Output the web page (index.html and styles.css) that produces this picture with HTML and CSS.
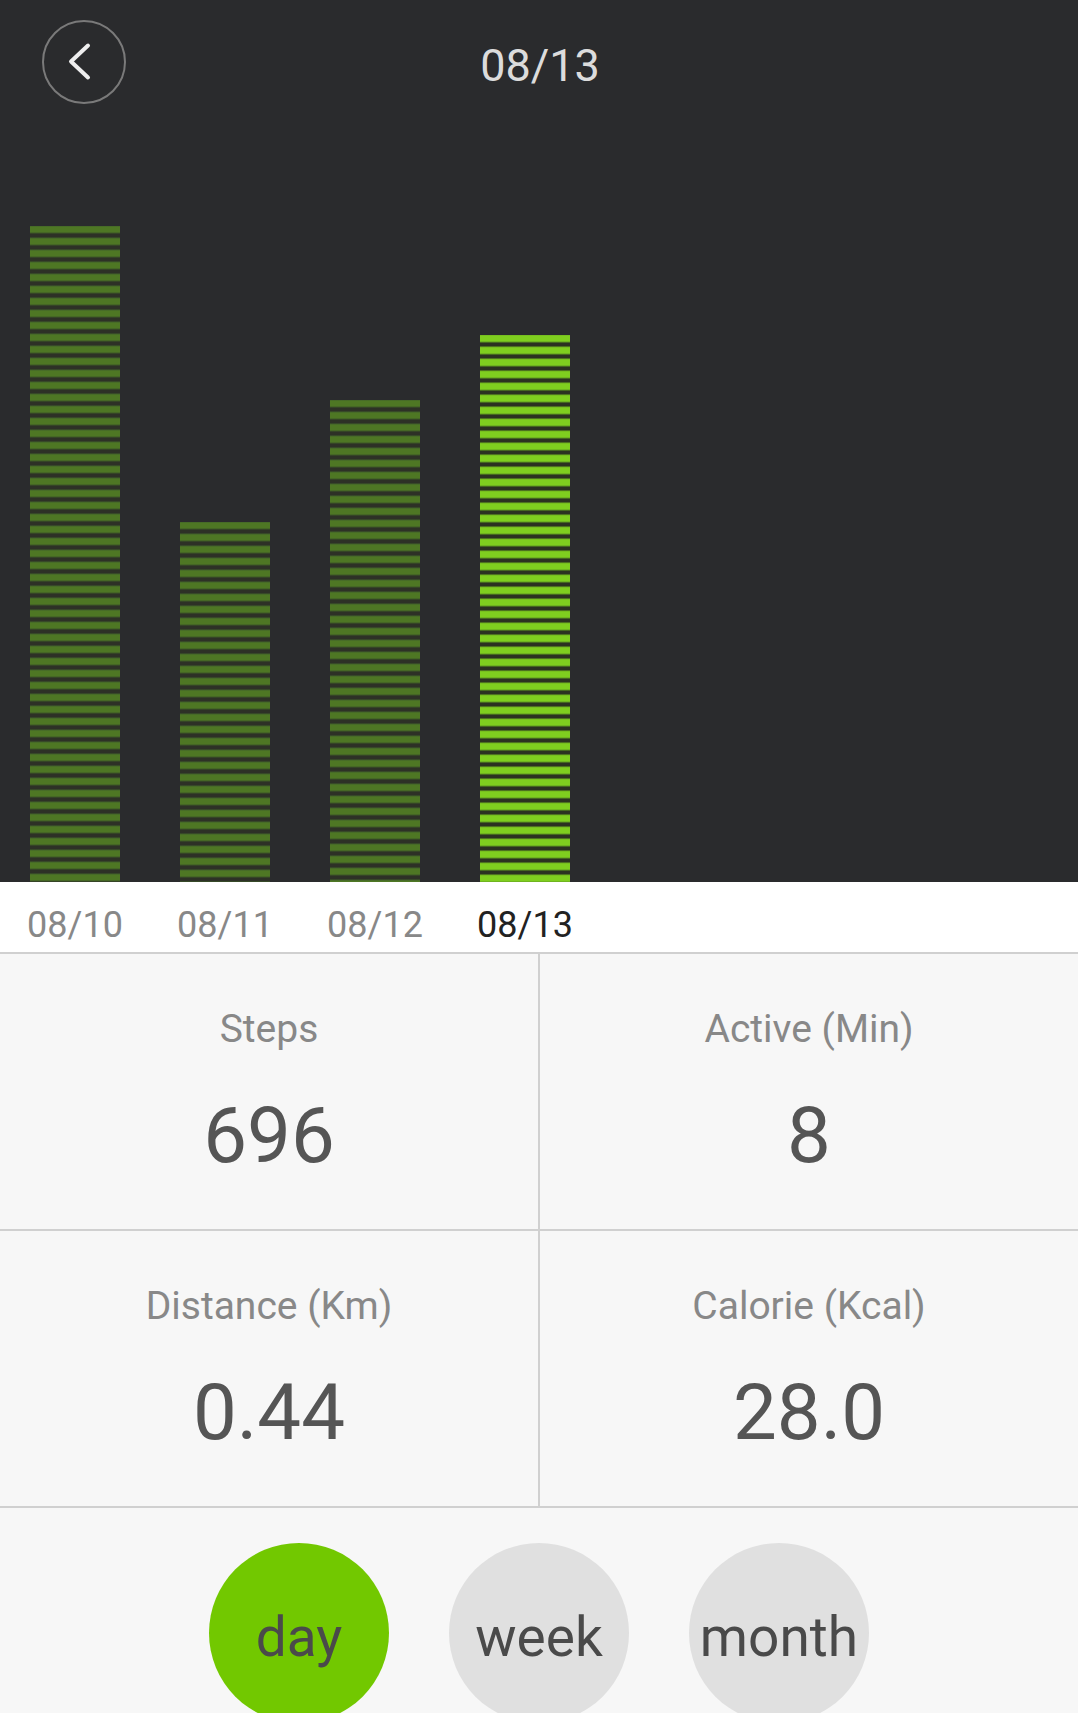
FILE: index.html
```html
<!DOCTYPE html>
<html lang="en">
<head>
    <meta charset="UTF-8">
    <meta name="viewport" content="width=device-width, initial-scale=1.0">
    <title>Activity - 08/13</title>
    <link rel="stylesheet" href="styles.css">
</head>
<body>
    <div class="dark">
        <header class="topbar">
            <button class="back" type="button" aria-label="Back">
                <svg width="84" height="84" viewBox="0 0 84 84">
                    <circle cx="42" cy="42" r="41" fill="none" stroke="#7a7a7a" stroke-width="2"/>
                    <polyline points="46,25.5 29,41.5 46,57.5" fill="none" stroke="#eeeeee" stroke-width="4" stroke-linecap="round" stroke-linejoin="round"/>
                </svg>
            </button>
            <h1 class="title">08/13</h1>
            <div></div>
        </header>

        <!-- barras por dia -->
        <div class="chart">
            <div class="bar" style="height: 656px"></div>
            <div class="bar" style="height: 360px"></div>
            <div class="bar" style="height: 482px"></div>
            <div class="bar bar-active" style="height: 547px"></div>
        </div>
    </div>

    <div class="days">
        <span class="day">08/10</span>
        <span class="day">08/11</span>
        <span class="day">08/12</span>
        <span class="day day-active">08/13</span>
    </div>

    <div class="stats">
        <div class="stat">
            <div class="stat-label">Steps</div>
            <div class="stat-value">696</div>
        </div>
        <div class="stat">
            <div class="stat-label">Active (Min)</div>
            <div class="stat-value">8</div>
        </div>
        <div class="stat">
            <div class="stat-label">Distance (Km)</div>
            <div class="stat-value">0.44</div>
        </div>
        <div class="stat">
            <div class="stat-label">Calorie (Kcal)</div>
            <div class="stat-value">28.0</div>
        </div>
    </div>

    <div class="modes">
        <button class="mode mode-active" type="button">day</button>
        <button class="mode" type="button">week</button>
        <button class="mode" type="button">month</button>
    </div>
</body>
</html>
```

FILE: styles.css
```css
body {
    margin: 0;
    padding: 0;
    background-color: #f7f7f7;
    font-family: Roboto, "Noto Sans", sans-serif;
    color: #555;
}

.dark {
    background-color: #2a2b2d;
}

.topbar {
    display: grid;
    grid-template-columns: 1fr auto 1fr;
    align-items: center;
    height: 105px;
    padding: 20px 42px 0;
    box-sizing: border-box;
    align-content: start;
}

.back {
    width: 84px;
    height: 84px;
    padding: 0;
    border: none;
    background: none;
    cursor: pointer;
}

.back svg {
    display: block;
}

.title {
    margin: 0;
    padding-top: 7px;
    padding-left: 2px;
    font-size: 45px;
    line-height: 45px;
    font-weight: 400;
    color: #dcdcdc;
}

.chart {
    display: flex;
    align-items: flex-end;
    gap: 60px;
    height: 777px;
    padding: 0 30px;
}

.bar {
    width: 90px;
    flex-shrink: 0;
    background: repeating-linear-gradient(
        to bottom,
        #40602a 0,
        #4e7724 1px,
        #4e7724 6px,
        #3c5726 7px,
        #2d3126 8px,
        #2d3126 11px,
        #40602a 12px
    );
}

.bar-active {
    background: repeating-linear-gradient(
        to bottom,
        #6fb01f 0,
        #7fce1f 1px,
        #7fce1f 6px,
        #5f9a1f 7px,
        #2b3121 8px,
        #2b3121 11px,
        #6fb01f 12px
    );
}

.days {
    display: flex;
    gap: 60px;
    height: 72px;
    padding: 22px 30px 0;
    box-sizing: border-box;
    background-color: #fff;
    border-bottom: 2px solid #d0d0d0;
}

.day {
    display: flex;
    justify-content: center;
    width: 90px;
    flex-shrink: 0;
    white-space: nowrap;
    font-size: 36px;
    line-height: 42px;
    color: #888;
}

.day-active {
    color: #222;
}

.stats {
    display: grid;
    grid-template-columns: 1fr 1fr;
    grid-auto-rows: 275px;
    gap: 2px;
    background-color: #d0d0d0;
    border-bottom: 2px solid #d0d0d0;
}

.stat {
    background-color: #f7f7f7;
    padding-top: 53px;
    text-align: center;
}

.stat-label {
    font-size: 39px;
    line-height: 44px;
    color: #888;
}

.stat-value {
    margin-top: 39px;
    font-size: 78px;
    line-height: 92px;
    color: #555;
}

.modes {
    display: flex;
    justify-content: center;
    gap: 60px;
    height: 205px;
    padding-top: 35px;
    box-sizing: border-box;
    overflow: hidden;
}

.mode {
    width: 180px;
    height: 180px;
    flex-shrink: 0;
    padding: 8px 0 0;
    border: none;
    border-radius: 50%;
    background-color: #e0e0e0;
    font-family: Roboto, "Noto Sans", sans-serif;
    font-size: 55px;
    color: #4a4a4a;
    cursor: pointer;
}

.mode-active {
    background-color: #72c800;
}
```
